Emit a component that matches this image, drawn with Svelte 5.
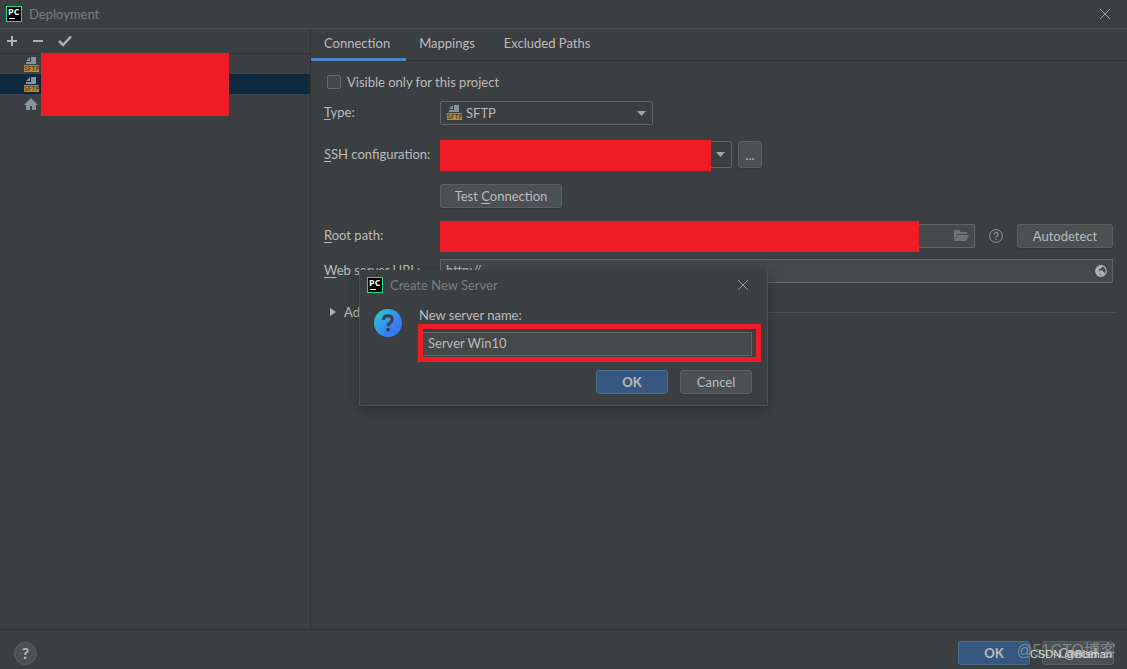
<script>
    const servers = [
        { id: 1, type: "sftp", name: "Server 1" },
        { id: 2, type: "sftp", name: "Server 2" },
        { id: 3, type: "local", name: "Local" },
    ];
    const tabs = ["Connection", "Mappings", "Excluded Paths"];

    let selected = $state(2);
    let activeTab = $state("Connection");
    let webUrl = $state("http://");
    let serverName = $state("Server Win10");
</script>

{#snippet logo()}
    <svg class="logo" width="16" height="16" viewBox="0 0 16 16" aria-hidden="true">
        <rect x="0.5" y="0.5" width="15" height="15" fill="#000" stroke="#21d789" />
        <text x="2" y="9" font-size="9" font-weight="700" fill="#fff">PC</text>
        <rect x="3" y="12" width="6" height="1" fill="#fff" />
    </svg>
{/snippet}

{#snippet sftpIcon()}
    <svg class="sftp" width="16" height="16" viewBox="0 0 16 16" aria-hidden="true">
        <path d="M7 0h5v7H2V5h5zM6 0v4H2z" fill="#87939a" />
        <rect y="8" width="15" height="7" fill="#b98b3b" />
        <text x="0" y="14" font-size="7" font-weight="600" fill="#4a3a1c">SFTP</text>
    </svg>
{/snippet}

{#snippet closeIcon()}
    <svg width="12" height="12" viewBox="0 0 12 12" aria-hidden="true">
        <path d="M1 1l10 10M11 1L1 11" stroke="#9a9c9e" />
    </svg>
{/snippet}

{#snippet arrow()}
    <svg class="arrow" width="9" height="5" viewBox="0 0 9 5" aria-hidden="true">
        <path d="M0 0h9L4.5 5z" fill="#a4a7a9" />
    </svg>
{/snippet}

<div class="window">
    <header class="title-bar">
        {@render logo()}
        <span class="title">Deployment</span>
        <button class="icon-button" aria-label="Close">{@render closeIcon()}</button>
    </header>

    <main>
        <aside class="side-bar">
            <div class="toolbar">
                <button class="icon-button" aria-label="Add">
                    <svg width="12" height="12" viewBox="0 0 12 12"><path d="M5 1h2v4h4v2H7v4H5V7H1V5h4z" fill="#afb1b3" /></svg>
                </button>
                <button class="icon-button" aria-label="Remove">
                    <svg width="12" height="12" viewBox="0 0 12 12"><path d="M1 5h10v2H1z" fill="#afb1b3" /></svg>
                </button>
                <button class="icon-button" aria-label="Use as default">
                    <svg width="14" height="12" viewBox="0 0 14 12"><path d="M1 6l4 4L13 1.5" fill="none" stroke="#afb1b3" stroke-width="2.5" /></svg>
                </button>
            </div>
            <div class="servers">
                {#each servers as server (server.id)}
                    <button
                        class="server"
                        class:is-selected={selected == server.id}
                        aria-label={server.name}
                        onclick={() => (selected = server.id)}
                    >
                        {#if server.type == "sftp"}
                            {@render sftpIcon()}
                        {:else}
                            <svg width="14" height="14" viewBox="0 0 14 14"><path d="M7 0l7 7h-2v5H8V8H6v4H2V7H0z" fill="#87939a" /></svg>
                        {/if}
                    </button>
                {/each}
                <div class="redacted redacted-servers"></div>
            </div>
        </aside>

        <section class="content">
            <nav class="tabs">
                {#each tabs as tab}
                    <button class="tab" class:is-active={activeTab == tab} onclick={() => (activeTab = tab)}>{tab}</button>
                {/each}
            </nav>

            <form class="form">
                <label class="check">
                    <input type="checkbox" />
                    <span>Visible only for this project</span>
                </label>

                <div class="row">
                    <label for="type"><u>T</u>ype:</label>
                    <div class="combo combo-type">
                        {@render sftpIcon()}
                        <select id="type">
                            <option>SFTP</option>
                        </select>
                        {@render arrow()}
                    </div>
                </div>

                <div class="row row-ssh">
                    <label for="ssh"><u>S</u>SH configuration:</label>
                    <div class="combo combo-ssh">
                        <select id="ssh"><option></option></select>
                        {@render arrow()}
                        <div class="redacted redacted-ssh"></div>
                    </div>
                    <button type="button" class="button more">...</button>
                </div>

                <div class="row row-test">
                    <button type="button" class="button test">Test <u>C</u>onnection</button>
                </div>

                <div class="row">
                    <label for="root"><u>R</u>oot path:</label>
                    <div class="field">
                        <input id="root" type="text" />
                        <svg class="field-icon" width="16" height="12" viewBox="0 0 16 12" aria-hidden="true">
                            <path d="M1 0h5l2 2h6v2H4l-3 6zM4 5h12l-3 6H1z" fill="#6c7478" />
                        </svg>
                        <div class="redacted redacted-root"></div>
                    </div>
                    <button type="button" class="icon-button root-help" aria-label="Help">
                        <svg width="14" height="14" viewBox="0 0 14 14">
                            <circle cx="7" cy="7" r="6.4" fill="none" stroke="#8d969b" />
                            <path d="M5 5.6a2 2 0 1 1 3 1.6q-1 .6-1 1.4" fill="none" stroke="#8d969b" stroke-width="1.2" />
                            <rect x="6.3" y="9.6" width="1.4" height="1.4" fill="#8d969b" />
                        </svg>
                    </button>
                    <button type="button" class="button autodetect">Autodetect</button>
                </div>

                <div class="row row-url">
                    <label for="url"><u>W</u>eb server URL:</label>
                    <div class="field">
                        <input id="url" type="text" bind:value={webUrl} />
                        <svg class="field-icon" width="12" height="12" viewBox="0 0 12 12" aria-hidden="true">
                            <circle cx="6" cy="6" r="5.3" fill="none" stroke="#aeb1b3" stroke-width="1.2" />
                            <path d="M1 3.5L4.500 7v1l1 1v2.500Q1 11 .7 6zM3 1.500Q5 0 7.500.8v1L6.500 3H5.500v1H4v1.500h4V7h1l.8 1.800Q8 11 6 11V9L4.500 7.500v-1L1 4z" fill="#aeb1b3" />
                        </svg>
                    </div>
                </div>

                <button type="button" class="advanced">
                    <svg width="6" height="8" viewBox="0 0 6 8" aria-hidden="true"><path d="M0 0l6 4-6 4z" fill="#afb1b3" /></svg>
                    <span>Advanced</span>
                </button>
            </form>
        </section>
    </main>

    <footer>
        <button class="help" aria-label="Help">?</button>
        <button class="button primary">OK</button>
        <button class="button">Cancel</button>
        <span class="mark mark-site">@51CTO博客</span>
        <span class="mark mark-author">CSDN @Bisman</span>
    </footer>

    <div class="dialog" role="dialog" aria-labelledby="dialog-title">
        <div class="dialog-bar">
            {@render logo()}
            <span class="title" id="dialog-title">Create New Server</span>
            <button class="icon-button" aria-label="Close dialog">{@render closeIcon()}</button>
        </div>
        <div class="dialog-body">
            <svg class="question" width="28" height="28" viewBox="0 0 28 28" aria-hidden="true">
                <defs>
                    <linearGradient id="question-fill" x1="0" y1="0" x2="1" y2="1">
                        <stop offset="0.1" stop-color="#27c6d0" />
                        <stop offset="0.7" stop-color="#3b78f5" />
                        <stop offset="1" stop-color="#1a86e0" />
                    </linearGradient>
                </defs>
                <circle cx="14" cy="14" r="14" fill="url(#question-fill)" />
                <path d="M9.500 10.800Q9.800 6.800 14 6.800t4.300 3.800q0 2-2.200 3.300-2 1.200-2 3.300" fill="none" stroke="#3c3f41" stroke-width="3" />
                <rect x="12.5" y="19" width="3.2" height="3.2" fill="#3c3f41" />
            </svg>
            <div class="dialog-form">
                <label for="server-name">New server name:</label>
                <div class="field name-field">
                    <input id="server-name" type="text" bind:value={serverName} />
                    <div class="highlight"></div>
                </div>
                <div class="dialog-buttons">
                    <button class="button primary">OK</button>
                    <button class="button">Cancel</button>
                </div>
            </div>
        </div>
    </div>
</div>

<style>
    :global(body) {
        background: #3c3f41;
    }

    .window {
        position: relative;
        display: flex;
        flex-direction: column;
        min-height: 100vh;
        background: #3c3f41;
        color: #bbbbbb;
        font: 13px/16px "Century Gothic", Lato, "Noto Sans CJK SC", sans-serif;
    }

    .window * {
        box-sizing: border-box;
    }

    button,
    input,
    select {
        margin: 0;
        padding: 0;
        border: 0;
        border-radius: 0;
        outline: none;
        background: none;
        color: inherit;
        font: inherit;
    }

    svg {
        display: block;
        flex: none;
    }

    svg text {
        font-family: "Open Sans", sans-serif;
    }

    u {
        text-underline-offset: 2px;
    }

    .title-bar {
        display: flex;
        align-items: center;
        height: 29px;
        padding: 0 16px 0 6px;
        border-bottom: 1px solid #515151;
    }

    .title {
        flex: 1;
        margin-left: 7px;
        color: #7b7d7f;
    }

    .icon-button {
        display: flex;
        align-items: center;
        justify-content: center;
    }

    main {
        display: flex;
        flex: 1;
    }

    .side-bar {
        width: 311px;
        border-right: 1px solid #323232;
    }

    .toolbar {
        display: flex;
        align-items: center;
        gap: 14px;
        height: 25px;
        padding: 0 6px;
        border-bottom: 1px solid #323232;
    }

    .servers {
        position: relative;
    }

    .server {
        display: flex;
        align-items: center;
        width: 100%;
        height: 20px;
        padding: 2px 24px 0;
    }

    .server.is-selected {
        background: #0d293e;
    }

    .redacted {
        position: absolute;
        left: 0;
        height: 31px;
        background: #ee1c25;
    }

    .redacted-servers {
        top: -1px;
        left: 41px;
        width: 188px;
        height: 63px;
    }

    .content {
        flex: 1;
        min-width: 0;
    }

    .tabs {
        display: flex;
        height: 32px;
        border-bottom: 1px solid #323232;
    }

    .tab {
        height: 32px;
        padding: 0 16px 2px 13px;
        border-bottom: 3px solid transparent;
    }

    .tab.is-active {
        border-color: #4a88c7;
    }

    .form {
        display: flex;
        flex-direction: column;
        padding: 13px 14px 0 13px;
    }

    .check {
        display: flex;
        align-items: center;
        gap: 6px;
        margin: 0 0 11px 3px;
    }

    .check input {
        appearance: none;
        width: 14px;
        height: 14px;
        border: 1px solid #6b6b6b;
        border-radius: 2px;
        background: #43494a;
    }

    .row {
        display: flex;
        align-items: center;
        height: 24px;
        margin-bottom: 16px;
    }

    .row > label {
        flex: none;
        width: 116px;
        padding-bottom: 2px;
    }

    .row-ssh {
        height: 27px;
    }

    .row-test {
        padding-left: 116px;
    }

    .row-url {
        margin: -5px 0 21px;
    }

    .combo {
        position: relative;
        display: flex;
        align-items: center;
        height: 100%;
        border: 1px solid #646464;
        border-radius: 2px;
    }

    .combo-type {
        width: 213px;
        padding-left: 6px;
    }

    .combo-ssh {
        width: 292px;
    }

    .combo select {
        flex: 1;
        height: 100%;
        padding-left: 3px;
        appearance: none;
    }

    .arrow {
        position: absolute;
        right: 6px;
    }

    .redacted-ssh {
        top: -2px;
        left: -1px;
        width: 271px;
    }

    .button {
        width: 72px;
        height: 24px;
        border: 1px solid #5e6060;
        border-radius: 3px;
        background: #4c5052;
        box-shadow: 0 1px 1px #35383a;
    }

    .button.primary {
        border-color: #4c708c;
        background: #365880;
        font-weight: 700;
    }

    .button.more {
        width: 24px;
        height: 100%;
        margin-left: 6px;
    }

    .button.test {
        width: 122px;
    }

    .button.autodetect {
        width: 96px;
    }

    .field {
        position: relative;
        display: flex;
        align-items: center;
        flex: 1;
        height: 24px;
        border: 1px solid #646464;
        background: #45494a;
    }

    .field input {
        flex: 1;
        min-width: 0;
        height: 100%;
        padding: 0 5px 2px;
    }

    .field-icon {
        margin-right: 5px;
    }

    .redacted-root {
        top: -4px;
        left: -1px;
        width: 479px;
    }

    .root-help {
        margin: 0 14px;
    }

    .advanced {
        display: flex;
        align-items: center;
        margin: 0 -3px 0 6px;
    }

    .advanced span {
        margin: 0 6px 0 8px;
    }

    .advanced::after {
        content: "";
        flex: 1;
        height: 1px;
        background: #515151;
    }

    footer {
        position: relative;
        display: flex;
        align-items: center;
        gap: 12px;
        height: 40px;
        padding: 7px 13px 0 14px;
        border-top: 1px solid #2f3233;
    }

    .help {
        width: 23px;
        height: 23px;
        margin-right: auto;
        border: 1px solid #5e6060;
        border-radius: 50%;
        background: #4c5052;
        font-size: 16px;
        font-weight: 700;
    }

    .mark {
        position: absolute;
        white-space: nowrap;
    }

    .mark-site {
        right: 11px;
        bottom: 6px;
        color: rgba(190, 192, 194, 0.5);
        font: 16px/24px "Liberation Sans", "Noto Sans CJK SC", sans-serif;
    }

    .mark-author {
        right: 15px;
        bottom: 6px;
        color: #dddddd;
        font: 11px/18px "Liberation Sans", sans-serif;
    }

    .dialog {
        position: absolute;
        top: 270px;
        right: 0;
        left: 0;
        width: 409px;
        margin: 0 auto;
        padding-bottom: 11px;
        border: 1px solid #4e5153;
        border-top-color: #3c3f41;
        background: #3c3f41;
        box-shadow: 0 3px 10px rgba(0, 0, 0, 0.3);
    }

    .dialog-bar {
        display: flex;
        align-items: center;
        height: 28px;
        padding: 0 18px 0 7px;
    }

    .dialog-body {
        display: flex;
        gap: 17px;
        padding: 8px 15px 0 14px;
    }

    .question {
        margin-top: 2px;
    }

    .dialog-form {
        flex: 1;
    }

    .dialog-form label {
        display: block;
    }

    .name-field {
        margin-top: 9px;
    }

    .name-field input {
        padding: 0 8px 2px;
    }

    .highlight {
        position: absolute;
        inset: -9px -10px -7px -2px;
        border: 5px solid #ee1c25;
        pointer-events: none;
    }

    .dialog-buttons {
        display: flex;
        justify-content: flex-end;
        gap: 12px;
        margin-top: 14px;
    }
</style>
